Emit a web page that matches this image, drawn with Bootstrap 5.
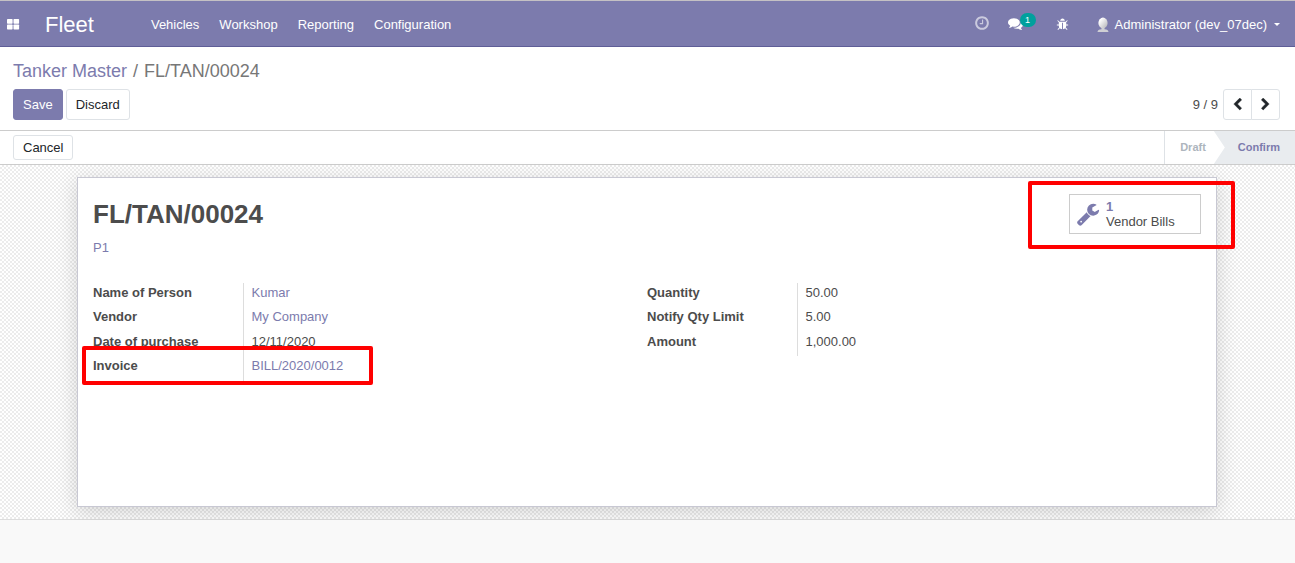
<!DOCTYPE html>
<html lang="en">
<head>
<meta charset="utf-8">
<meta name="viewport" content="width=device-width, initial-scale=1">
<title>Fleet - FL/TAN/00024</title>
<link rel="stylesheet" href="https://cdn.jsdelivr.net/npm/bootstrap@5.3.0/dist/css/bootstrap.min.css">
<style>
:root { --brand: #7c7bad; --line: #dee2e6; }
body { font-family: "Liberation Sans", Arial, sans-serif; font-size: 13px; line-height: 20px; color: #4c4c4c; background: #f9f9f9; }
a { color: var(--brand); text-decoration: none; }
.icon { fill: currentColor; display: block; }
.top-bar { height: 47px; background: var(--brand); border-top: 1px solid #c4c1c4; border-bottom: 1px solid #5f5e97; padding: 2px 15px 0 6px; }
.top-bar a, .top-bar button { color: #fff; }
.app-name { font-size: 22px; margin: 0 57px 0 25px; }
.menu-links { gap: 20px; }
.tray { gap: 18px; }
.clock-link { padding-bottom: 4px; opacity: .6; }
.chat-btn { width: 30px; }
.chat-btn .icon { margin-top: -2px; }
.user-btn { font-size: 13px; line-height: 20px; gap: 5px; margin-left: 9px; }
.user-btn .caret { margin-left: 2px; }
.count-badge { position: absolute; left: 12px; top: -5px; width: 16px; height: 14px; border-radius: 7px; background: #00a09d; font-size: 9px; line-height: 14px; text-align: center; }
.control-panel { padding: 12px 15px 10px 13px; border-bottom: 1px solid #ccc; }
.breadcrumb-line { font-size: 18px; line-height: 24px; margin-bottom: 6px; color: #777; gap: 6px; }
.button-row { gap: 3px; }
.pager-count { margin-right: 2px; }
.btn-tool { font-size: 13px; line-height: 19px; padding: 5px 9px; border: 1px solid var(--line); border-radius: 3px; background: #fff; color: #212529; }
.btn-tool:hover { border-color: #adb5bd; }
.btn-save { background: var(--brand); border-color: var(--brand); color: #fff; }
.btn-save:hover { background: #6a69a0; color: #fff; }
.btn-cancel { padding: 2px 9px; }
.btn-pager { padding: 8px 7px; height: 31px; }
.btn-pager .icon { stroke: currentColor; stroke-width: 60; }
.status-row { height: 34px; padding-left: 13px; border-bottom: 1px solid #ccc; }
.stages { font-size: 11px; line-height: 32px; font-weight: bold; border-left: 1px solid var(--line); }
.stage-draft { padding: 0 8px 0 15px; color: #adb5bd; }
.stage-confirm { padding: 0 15px 0 24px; color: var(--brand); background: #e9ecef; clip-path: polygon(0 0, 100% 0, 100% 100%, 0 100%, 11px 50%); }
.form-canvas { padding: 12px 13px 12px 12px; border-bottom: 1px solid #ddd; background: conic-gradient(#ececec 25%, #fff 0 50%, #ececec 0 75%, #fff 0) 0 0 / 4px 4px; }
.form-sheet { max-width: 1140px; min-height: 330px; padding: 16px 15px; background: #fff; border: 1px solid #c8c8d3; box-shadow: 0 5px 20px rgba(0, 0, 0, .16); }
.record-name { font-size: 26px; line-height: 30px; font-weight: bold; margin: 5px 0 9px; }
.stat-btn { width: 132px; height: 40px; padding: 0 6px; gap: 6px; border: 1px solid #ccc; background: #fff; color: #4c4c4c; font-size: 13px; line-height: 15px; text-align: left; }
.stat-btn .icon { color: var(--brand); }
.stat-count { font-weight: bold; color: var(--brand); }
.field-area { margin-top: 25px; }
.field-table th { width: 150px; height: 24px; padding: 0; line-height: 20px; vertical-align: top; }
.field-table td { padding: 0 8px; line-height: 20px; border-left: 1px solid #ddd; vertical-align: top; }
.field-table tr:nth-child(even) th { height: 25px; }
.mark-box { position: absolute; border: 4px solid #f00; border-radius: 2px; pointer-events: none; }
.mark-bills { inset: -13px -34px -15px -41px; }
.mark-invoice { left: -11px; top: -10px; width: 291px; height: 39px; }
</style>
<script src="https://cdn.jsdelivr.net/npm/bootstrap@5.3.0/dist/js/bootstrap.bundle.min.js"></script>
</head>
<body>
<header class="top-bar d-flex align-items-center">
  <a href="#" aria-label="Applications"><svg class="icon" width="14" height="14" viewBox="0 0 14 14"><rect x="1" y="1" width="5.6" height="4.8" rx=".7"/><rect x="7.5" y="1" width="5.6" height="4.8" rx=".7"/><rect x="1" y="6.600" width="5.6" height="4.8" rx=".7"/><rect x="7.5" y="6.600" width="5.6" height="4.8" rx=".7"/></svg></a>
  <a href="#" class="app-name">Fleet</a>
  <nav class="menu-links d-flex">
    <a href="#">Vehicles</a><a href="#">Workshop</a><a href="#">Reporting</a><a href="#">Configuration</a>
  </nav>
  <div class="tray d-flex align-items-center ms-auto">
    <a href="#" class="clock-link" aria-label="Activities"><svg class="icon" width="16" height="16" viewBox="0 0 1792 1792"><path d="M1024 544v448q0 14-9 23t-23 9h-320q-14 0-23-9t-9-23v-64q0-14 9-23t23-9h224v-352q0-14 9-23t23-9h64q14 0 23 9t9 23zm416 352q0-148-73-273t-198-198-273-73-273 73-198 198-73 273 73 273 198 198 273 73 273-73 198-198 73-273zm224 0q0 209-103 385.5t-279.5 279.5-385.5 103-385.5-103-279.5-279.5-103-385.5 103-385.5 279.5-279.5 385.5-103 385.5 103 279.5 279.5 103 385.5z"/></svg></a>
    <a href="#" class="chat-btn position-relative" aria-label="Messages"><svg class="icon" width="15" height="15" viewBox="0 0 1792 1792"><path d="M1408 768q0 139-94 257t-256.5 186.5-353.5 68.5q-86 0-176-16-124 88-278 128-36 9-86 16h-3q-11 0-20.5-8t-11.5-21q-1-3-1-6.500t.5-6.500 2-6l2.500-5 3.500-5.500 4-5 4.500-5 4-4.500q5-6 23-25t26-29.500 22.500-29 25-38.500 20.500-44q-124-72-195-177t-71-224q0-139 94-257t256.500-186.500 353.500-68.500 353.500 68.500 256.500 186.500 94 257zm384 256q0 120-71 224.500t-195 176.500q10 24 20.500 44t25 38.500 22.500 29 26 29.500 23 25q1 1 4 4.500t4.500 5 4 5 3.500 5.500l2.500 5 2 6 .5 6.500-1 6.500q-3 14-13 22t-22 7q-50-7-86-16-154-40-278-128-90 16-176 16-271 0-472-132 58 4 88 4 161 0 309-45t264-129q125-92 192-212t67-254q0-77-23-152 129 71 204 178t75 230z"/></svg><span class="count-badge">1</span></a>
    <a href="#" aria-label="Debug"><svg class="icon" width="13" height="13" viewBox="0 0 1792 1792"><path d="M1696 960q0 26-19 45t-45 19h-224q0 171-67 290l208 209q19 19 19 45t-19 45q-18 19-45 19t-45-19l-198-197q-5 5-15 13t-42 28.500-65 36.500-82 29-97 13v-896h-128v896q-51 0-101.500-13.500t-87-33-66-39-43.500-32.500l-15-14-183 207q-20 21-48 21-24 0-43-16-19-18-20.500-44.500t15.500-46.500l202-227q-58-114-58-274h-224q-26 0-45-19t-19-45 19-45 45-19h224v-294l-173-173q-19-19-19-45t19-45 45-19 45 19l173 173h844l173-173q19-19 45-19t45 19 19 45-19 45l-173 173v294h224q26 0 45 19t19 45zm-480-576h-640q0-133 93.500-226.500t226.500-93.500 226.500 93.500 93.500 226.500z"/></svg></a>
    <button type="button" class="user-btn d-flex align-items-center border-0 bg-transparent p-0">
      <svg width="14" height="16" viewBox="0 0 14 16"><defs><linearGradient id="av" x2="1" y2="1"><stop offset=".2" stop-color="#fff"/><stop offset="1" stop-color="#b0b0b4"/></linearGradient></defs><ellipse cx="7" cy="6" rx="4.600" ry="5.400" fill="url(#av)"/><path fill="#cfcfd4" d="M5.500 10.500h3v1.700c2.500.2 4 1 4 2.800h-11c0-1.800 1.500-2.600 4-2.800z"/></svg>
      <span>Administrator (dev_07dec)</span>
      <svg class="icon caret" width="6" height="4" viewBox="0 0 6 4"><path d="M0 0h6L3 3z"/></svg>
    </button>
  </div>
</header>

<section class="control-panel bg-white">
  <div class="breadcrumb-line d-flex"><a href="#">Tanker Master</a><span>/</span><span>FL/TAN/00024</span></div>
  <div class="button-row d-flex align-items-center">
    <button type="button" class="btn btn-tool btn-save">Save</button>
    <button type="button" class="btn btn-tool">Discard</button>
    <span class="pager-count ms-auto">9 / 9</span>
    <div class="btn-group">
      <button type="button" class="btn btn-tool btn-pager" aria-label="Previous"><svg class="icon" width="13" height="13" viewBox="0 0 1792 1792"><path d="M1427 301l-531 531 531 531q19 19 19 45t-19 45l-166 166q-19 19-45 19t-45-19l-742-742q-19-19-19-45t19-45l742-742q19-19 45-19t45 19l166 166q19 19 19 45t-19 45z"/></svg></button>
      <button type="button" class="btn btn-tool btn-pager" aria-label="Next"><svg class="icon" width="13" height="13" viewBox="0 0 1792 1792"><path d="M1363 877l-742 742q-19 19-45 19t-45-19l-166-166q-19-19-19-45t19-45l531-531-531-531q-19-19-19-45t19-45l166-166q19-19 45-19t45 19l742 742q19 19 19 45t-19 45z"/></svg></button>
    </div>
  </div>
</section>

<section class="status-row d-flex align-items-center bg-white">
  <button type="button" class="btn btn-tool btn-cancel">Cancel</button>
  <div class="stages d-flex align-self-stretch ms-auto">
    <span class="stage-draft">Draft</span>
    <span class="stage-confirm">Confirm</span>
  </div>
</section>

<main class="form-canvas">
  <article class="form-sheet mx-auto">
    <div class="d-flex justify-content-between align-items-start">
      <div>
        <h1 class="record-name">FL/TAN/00024</h1>
        <a href="#">P1</a>
      </div>
      <div class="position-relative">
        <button type="button" class="stat-btn d-flex align-items-center">
          <svg class="icon" width="24" height="24" viewBox="0 0 1792 1792"><path d="M448 1472q0-26-19-45t-45-19-45 19-19 45 19 45 45 19 45-19 19-45zm644-420l-682 682q-37 37-90 37-52 0-91-37l-106-108q-38-36-38-90 0-53 38-91l681-681q39 98 114.500 173.500t173.500 114.500zm634-435q0 39-23 106-47 134-164.500 217.500t-258.500 83.500q-185 0-316.500-131.500t-131.500-316.500 131.500-316.500 316.500-131.500q58 0 121.500 16.500t107.500 46.500q16 11 16 28t-16 28l-293 169v224l193 107q5-3 79-48.500t135.500-81 70.500-35.500q15 0 23.500 10t8.500 25z"/></svg>
          <span><span class="stat-count d-block">1</span><span class="d-block">Vendor Bills</span></span>
        </button>
        <span class="mark-box mark-bills"></span>
      </div>
    </div>
    <div class="field-area row g-0">
      <div class="col-6">
        <table class="field-table w-100">
          <tr><th scope="row">Name of Person</th><td><a href="#">Kumar</a></td></tr>
          <tr><th scope="row">Vendor</th><td><a href="#">My Company</a></td></tr>
          <tr><th scope="row">Date of purchase</th><td>12/11/2020</td></tr>
          <tr><th scope="row" class="position-relative">Invoice<span class="mark-box mark-invoice"></span></th><td><a href="#">BILL/2020/0012</a></td></tr>
        </table>
      </div>
      <div class="col-6">
        <table class="field-table w-100">
          <tr><th scope="row">Quantity</th><td>50.00</td></tr>
          <tr><th scope="row">Notify Qty Limit</th><td>5.00</td></tr>
          <tr><th scope="row">Amount</th><td>1,000.00</td></tr>
        </table>
      </div>
    </div>
  </article>
</main>
</body>
</html>
